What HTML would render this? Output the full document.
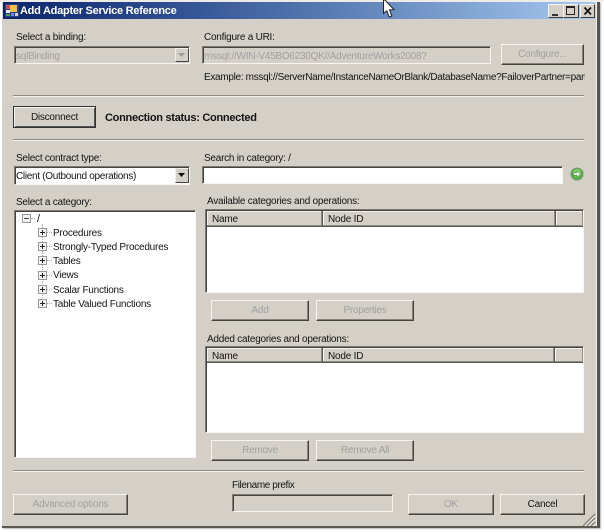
<!DOCTYPE html>
<html><head><meta charset="utf-8">
<style>
html,body{margin:0;padding:0;background:#fff}
#w{position:relative;width:604px;height:532px;overflow:hidden;background:#fff;font-family:"Liberation Sans",sans-serif;font-size:10px;color:#141414;filter:blur(.3px)}
#w div,#w svg{position:absolute}
.t{white-space:nowrap;line-height:12px;letter-spacing:-.24px;margin-top:1px}
.dis{color:#a0a0a0}
.sep{height:1px;background:#8f8c86;border-bottom:1px solid #f4f3ef}
.btn{box-sizing:border-box;background:#d4d0c8;border:1px solid;border-color:#f6f5f1 #46443f #46443f #f6f5f1;box-shadow:inset -1px -1px 0 #85827b;text-align:center;line-height:20px;color:#a0a0a0;letter-spacing:-.24px}
.sunk{box-sizing:border-box;border:1px solid;border-color:#7d7a74 #f6f5f1 #f6f5f1 #7d7a74;box-shadow:inset 1px 1px 0 #45433f}
.arrow{box-sizing:border-box;background:#d4d0c8;border:1px solid;border-color:#f0efea #444 #444 #f0efea}
.hd{box-sizing:border-box;background:#d4d0c8;border-right:1px solid #5a5853;border-bottom:1px solid #5a5853;box-shadow:inset -1px 0 0 #8f8c86,inset 0 -1px 0 #8f8c86,inset 1px 1px 0 #f4f3ef;line-height:18px;padding-left:5px;white-space:nowrap;letter-spacing:-.2px}
.pl{box-sizing:border-box;width:9px;height:9px;border:1px solid #999;background:#f2f2f2}
.pl:before{content:"";position:absolute;left:1px;top:3px;width:5px;height:1px;background:#222}
.pl:after{content:"";position:absolute;left:3px;top:1px;width:1px;height:5px;background:#222}
.cap{box-sizing:border-box;width:16px;height:14px;top:4px;background:#d4d0c8;border:1px solid;border-color:#f4f3ef #3c3c3c #3c3c3c #f4f3ef}
</style></head><body>
<div id="w">
<!-- window -->
<div style="left:0;top:0;width:604px;height:2px;background:#eeece8"></div>
<div style="left:2px;top:2px;width:598px;height:526px;background:#d4d0c8;border-right:3px solid #55534e;border-bottom:2px solid #5b5954;box-sizing:border-box;box-shadow:1px 1px 1px #bbb"></div>
<div style="left:596px;top:2px;width:1px;height:524px;background:#f0efea"></div>
<div style="left:3px;top:2px;width:592px;height:17px;background:linear-gradient(90deg,#0a246a 0%,#2a4a8c 25%,#5d80b6 58%,#a6caf0 100%)"></div>
<!-- title icon -->
<svg style="left:4px;top:3px" width="16" height="15" viewBox="0 0 16 15">
<rect x="1" y="1" width="14" height="13" fill="#2a3f86"/>
<rect x="2" y="2" width="4" height="4" fill="#d05050"/><rect x="6" y="2" width="7" height="7" fill="#f0c040"/>
<rect x="2" y="7" width="4" height="3" fill="#e8e8e8"/><rect x="2" y="11" width="4" height="2" fill="#50a050"/>
<rect x="7" y="10" width="3" height="3" fill="#6090e0"/><rect x="11" y="10" width="3" height="3" fill="#d0d0d0"/>
</svg>
<div class="t" style="left:20px;top:4px;margin-top:0;color:#fff;font-weight:bold;font-size:11px;line-height:14px;letter-spacing:-.26px">Add Adapter Service Reference</div>
<!-- caption buttons -->
<div class="cap" style="left:548px"></div><div style="left:552px;top:14px;width:6px;height:2px;background:#333"></div>
<div class="cap" style="left:563px"></div><div style="left:566px;top:6px;width:9px;height:9px;box-sizing:border-box;border:1px solid #222;border-top-width:2px"></div>
<div class="cap" style="left:580px;width:15px"></div>
<svg style="left:583px;top:6px" width="10" height="10" viewBox="0 0 10 10"><path d="M1.5 1.5L8 8.5M8 1.5L1.5 8.5" stroke="#111" stroke-width="1.7"/></svg>
<!-- cursor -->
<svg style="left:382px;top:0" width="14" height="19" viewBox="0 0 14 19"><path d="M1.5 0V13.5L4.8 10.8L7.2 17L9.8 16L7.5 9.8L12 9.6L3 0Z" fill="#fff" stroke="#222" stroke-width="1"/></svg>

<!-- row 1 -->
<div class="t" style="left:16px;top:31px">Select a binding:</div>
<div class="sunk" style="left:14px;top:46px;width:176px;height:18px"></div>
<div class="t dis" style="left:16px;top:50px">sqlBinding</div>
<div class="arrow" style="left:175px;top:48px;width:14px;height:14px"></div>
<svg style="left:178px;top:53px" width="8" height="5"><path d="M0 0H7L3.5 4Z" fill="#9a9a9a"/></svg>
<div class="t" style="left:204px;top:31px">Configure a URI:</div>
<div class="sunk" style="left:202px;top:46px;width:289px;height:18px"></div>
<div class="t dis" style="left:204px;top:50px">mssql://WIN-V45BO6230QK//AdventureWorks2008?</div>
<div class="btn" style="left:501px;top:44px;width:83px;height:21px">Configure...</div>
<div style="left:204px;top:71px;width:381px;height:14px;overflow:hidden"><div class="t" style="left:0;top:0;letter-spacing:-.31px">Example: mssql://ServerName/InstanceNameOrBlank/DatabaseName?FailoverPartner=partner</div></div>
<div class="sep" style="left:13px;top:95px;width:571px"></div>
<!-- row 2 -->
<div class="btn" style="left:13px;top:106px;width:83px;height:22px;color:#141414;border:1px solid #333;box-shadow:inset 1px 1px 0 #f6f5f1,inset -1px -1px 0 #555;line-height:22px">Disconnect</div>
<div class="t" style="left:105px;top:111px;font-weight:bold;font-size:11px;letter-spacing:-.28px">Connection status: Connected</div>
<div class="sep" style="left:13px;top:139px;width:571px"></div>
<!-- row 3 -->
<div class="t" style="left:16px;top:152px">Select contract type:</div>
<div class="sunk" style="left:14px;top:166px;width:176px;height:19px;background:#fff"></div>
<div class="t" style="left:16px;top:170px;letter-spacing:-.3px">Client (Outbound operations)</div>
<div class="arrow" style="left:175px;top:168px;width:14px;height:15px"></div>
<svg style="left:178px;top:173px" width="8" height="5"><path d="M0 0H7L3.5 4Z" fill="#111"/></svg>
<div class="t" style="left:204px;top:152px">Search in category: /</div>
<div class="sunk" style="left:202px;top:166px;width:361px;height:18px;background:#fff"></div>
<svg style="left:570px;top:167px" width="14" height="14" viewBox="0 0 14 14"><circle cx="7" cy="7" r="6" fill="#58b048" stroke="#6f9a62"/><circle cx="7" cy="6" r="4" fill="#7fcf68"/><path d="M3.5 5.8H7V3.8L10.5 7L7 10.2V8.2H3.5Z" fill="#f2f2f2" stroke="#3e7a34" stroke-width=".5"/></svg>
<!-- tree -->
<div class="t" style="left:16px;top:196px">Select a category:</div>
<div class="sunk" style="left:14px;top:210px;width:182px;height:248px;background:#fff"></div>
<div class="pl" style="left:22px;top:214px"></div><div style="left:24px;top:216px;width:5px;height:5px;background:#f2f2f2"></div><div style="left:24px;top:218px;width:5px;height:1px;background:#444"></div>
<div style="left:31px;top:218px;width:4px;border-top:1px dotted #aaa"></div>
<div class="t" style="left:37px;top:212px;font-size:11px">/</div>
<div style="left:42px;top:224px;height:80px;border-left:1px dotted #aaa"></div>
<div class="pl" style="left:38px;top:228px"></div><div style="left:47px;top:232px;width:5px;border-top:1px dotted #aaa"></div><div class="t" style="left:53px;top:227px">Procedures</div>
<div class="pl" style="left:38px;top:242px"></div><div style="left:47px;top:246px;width:5px;border-top:1px dotted #aaa"></div><div class="t" style="left:53px;top:241px">Strongly-Typed Procedures</div>
<div class="pl" style="left:38px;top:256px"></div><div style="left:47px;top:260px;width:5px;border-top:1px dotted #aaa"></div><div class="t" style="left:53px;top:255px">Tables</div>
<div class="pl" style="left:38px;top:271px"></div><div style="left:47px;top:275px;width:5px;border-top:1px dotted #aaa"></div><div class="t" style="left:53px;top:269px">Views</div>
<div class="pl" style="left:38px;top:285px"></div><div style="left:47px;top:289px;width:5px;border-top:1px dotted #aaa"></div><div class="t" style="left:53px;top:284px">Scalar Functions</div>
<div class="pl" style="left:38px;top:299px"></div><div style="left:47px;top:303px;width:5px;border-top:1px dotted #aaa"></div><div class="t" style="left:53px;top:298px">Table Valued Functions</div>
<!-- list 1 -->
<div class="t" style="left:207px;top:195px">Available categories and operations:</div>
<div class="sunk" style="left:205px;top:209px;width:379px;height:84px;background:#fff"></div>
<div class="hd" style="left:207px;top:211px;width:116px;height:16px">Name</div>
<div class="hd" style="left:323px;top:211px;width:233px;height:16px">Node ID</div>
<div class="hd" style="left:556px;top:211px;width:27px;height:16px;border-right:0"></div>
<div class="btn" style="left:211px;top:300px;width:98px;height:21px">Add</div>
<div class="btn" style="left:316px;top:300px;width:98px;height:21px">Properties</div>
<!-- list 2 -->
<div class="t" style="left:207px;top:333px">Added categories and operations:</div>
<div class="sunk" style="left:205px;top:346px;width:379px;height:87px;background:#fff"></div>
<div class="hd" style="left:207px;top:348px;width:116px;height:15px">Name</div>
<div class="hd" style="left:323px;top:348px;width:232px;height:15px">Node ID</div>
<div class="hd" style="left:555px;top:348px;width:28px;height:15px;border-right:0"></div>
<div class="btn" style="left:211px;top:440px;width:98px;height:21px">Remove</div>
<div class="btn" style="left:316px;top:440px;width:98px;height:21px">Remove All</div>
<div class="sep" style="left:13px;top:470px;width:571px"></div>
<!-- bottom -->
<div class="t" style="left:232px;top:479px;letter-spacing:-.4px">Filename prefix</div>
<div class="sunk" style="left:232px;top:494px;width:161px;height:18px"></div>
<div class="btn" style="left:13px;top:494px;width:115px;height:21px">Advanced options</div>
<div class="btn" style="left:408px;top:494px;width:86px;height:21px">OK</div>
<div class="btn" style="left:500px;top:494px;width:85px;height:21px;color:#141414">Cancel</div>
<svg style="left:582px;top:513px" width="14" height="14" viewBox="0 0 14 14"><path d="M1 13L13 1M5 13L13 5M9 13L13 9" stroke="#77746e" stroke-width="1.2"/><path d="M3 13L13 3M7 13L13 7M11 13L13 11" stroke="#f4f3ef" stroke-width=".8"/></svg>
</div>
</body></html>
